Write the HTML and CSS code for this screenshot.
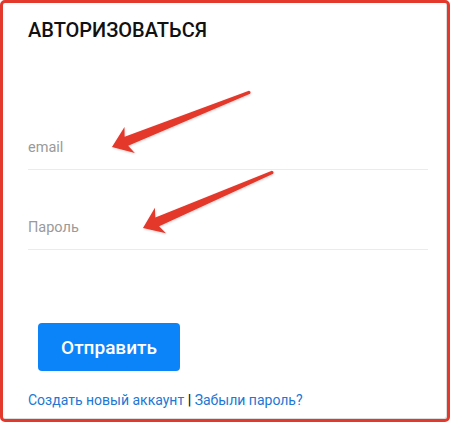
FILE: index.html
```html
<!DOCTYPE html>
<html lang="ru">
<head>
<meta charset="utf-8">
<link rel="stylesheet" href="styles.css">
</head>
<body>
<div class="frame">
  <h1 class="title">АВТОРИЗОВАТЬСЯ</h1>
  <div class="field field-first"><span class="placeholder">email</span></div>
  <div class="field"><span class="placeholder">Пароль</span></div>
  <button class="submit">Отправить</button>
  <div class="links"><a class="link">Создать новый аккаунт</a> <span class="sep">|</span> <a class="link">Забыли пароль?</a></div>
  <svg class="arrows" width="450" height="422" viewBox="0 0 450 422">
    <defs>
      <filter id="sh" x="-20%" y="-40%" width="140%" height="180%">
        <feDropShadow dx="0.5" dy="1" stdDeviation="1" flood-color="#000" flood-opacity="0.18"/>
      </filter>
    </defs>
    <g filter="url(#sh)" fill="#e3382c">
      <g transform="translate(112 147) rotate(-21.7)">
        <path d="M0 0 L19 -14 L15.5 -4.8 L148 -1.6 Q150 0 148 1.6 L15.5 4.8 L19 14 Z"/>
      </g>
      <g transform="translate(143 228) rotate(-23.3)">
        <path d="M0 0 L19 -14 L15.5 -4.8 L141 -1.6 Q143 0 141 1.6 L15.5 4.8 L19 14 Z"/>
      </g>
    </g>
  </svg>
</div>
</body>
</html>
```
FILE: styles.css
```css
html, body {
  margin: 0;
  padding: 0;
  background: #ffffff;
}
.frame {
  position: relative;
  box-sizing: border-box;
  width: 450px;
  height: 422px;
  border: 3px solid #e3392d;
  border-radius: 5px;
  box-shadow: inset -1px -1px 0 #dcdcdc;
  padding: 16px 19px 0 25px;
  font-family: Roboto, "Liberation Sans", Arial, sans-serif;
  background: #ffffff;
}
.title {
  margin: 0;
  font-size: 20px;
  line-height: 22px;
  font-weight: 500;
  color: #111111;
}
.field {
  padding: 49px 0 12px;
  border-bottom: 1px solid #ebebeb;
  font-size: 14.5px;
  line-height: 18px;
}
.field-first {
  margin-top: 49px;
}
.placeholder {
  color: #9a9a9a;
}
.submit {
  display: block;
  margin: 73px 0 0 10px;
  width: 142px;
  height: 48px;
  border: none;
  border-radius: 4px;
  background: #0b84fa;
  color: #ffffff;
  font-family: Roboto, "Liberation Sans", Arial, sans-serif;
  font-size: 19px;
  font-weight: 500;
  padding: 0;
}
.links {
  margin-top: 20px;
  font-size: 14px;
  line-height: 18px;
}
.link {
  color: #2177d3;
}
.sep {
  color: #111111;
  font-weight: 700;
}
.arrows {
  position: absolute;
  left: -3px;
  top: -3px;
  pointer-events: none;
}
```
